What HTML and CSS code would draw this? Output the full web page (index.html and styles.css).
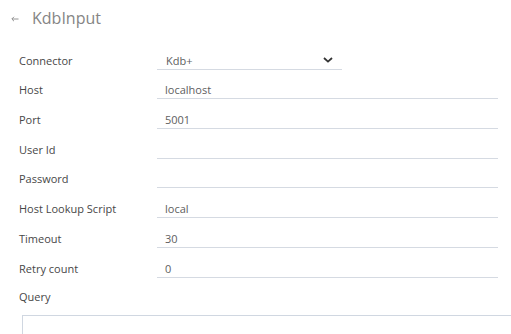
FILE: index.html
```html
<!DOCTYPE html>
<html lang="en">

<head>
  <meta charset="UTF-8">
  <meta name="viewport" content="width=device-width, initial-scale=1.0">
  <title>KdbInput</title>
  <link rel="stylesheet" href="styles.css">
</head>

<body>
  <div class="page">
    <div class="header">
      <span class="back">
        <svg width="8" height="6" viewBox="0 0 8 6"><path d="M7.5 3H1M3 0.8L0.8 3L3 5.2" fill="none" stroke="#888" stroke-width="0.9"/></svg>
      </span>
      <h1>KdbInput</h1>
    </div>
    <form class="form">
      <div class="form-row">
        <label>Connector</label>
        <div class="field select">
          <span>Kdb+</span>
          <svg width="10" height="6" viewBox="0 0 10 6"><path d="M1 1L5 4.6L9 1" fill="none" stroke="#333" stroke-width="1.8"/></svg>
        </div>
      </div>
      <div class="form-row">
        <label>Host</label>
        <div class="field">localhost</div>
      </div>
      <div class="form-row">
        <label>Port</label>
        <div class="field">5001</div>
      </div>
      <div class="form-row">
        <label>User Id</label>
        <div class="field"></div>
      </div>
      <div class="form-row">
        <label>Password</label>
        <div class="field"></div>
      </div>
      <div class="form-row">
        <label>Host Lookup Script</label>
        <div class="field">local</div>
      </div>
      <div class="form-row">
        <label>Timeout</label>
        <div class="field">30</div>
      </div>
      <div class="form-row">
        <label>Retry count</label>
        <div class="field">0</div>
      </div>
      <div class="query">
        <label>Query</label>
        <div class="query-box"></div>
      </div>
    </form>
  </div>
</body>

</html>
```

FILE: styles.css
```css
body {
  margin: 0;
  padding: 0;
  font-family: "Open Sans", Arial, sans-serif;
  background: #fff;
  color: #444;
  overflow: hidden;
}

.page {
  width: 511px;
  height: 334px;
  overflow: hidden;
}

.header {
  display: flex;
  align-items: center;
  height: 36px;
  padding-left: 11px;
}

.back {
  display: flex;
  width: 21px;
  padding-top: 1px;
}

.header h1 {
  margin: 0;
  font-size: 16px;
  font-weight: 400;
  line-height: 22px;
  color: #858585;
}

.form {
  padding: 10px 0 0 19px;
}

.form-row {
  display: flex;
  align-items: flex-end;
  height: 29.7px;
  padding-bottom: 6px;
  box-sizing: border-box;
}

.form-row label {
  width: 138px;
  font-size: 11px;
  line-height: 16px;
  padding-bottom: 1px;
  color: #474747;
}

.field {
  width: 333px;
  height: 16px;
  padding-left: 8px;
  font-size: 11px;
  line-height: 16px;
  color: #5e5e5e;
  border-bottom: 1px solid #d5dae2;
}

.field.select {
  display: flex;
  align-items: center;
  justify-content: space-between;
  width: 167px;
  padding-left: 9px;
  padding-right: 9px;
}

.field.select svg {
  margin-top: -2px;
}

.query label {
  display: block;
  margin-top: 5px;
  font-size: 11px;
  line-height: 16px;
  color: #474747;
}

.query-box {
  margin: 10px 0 0 3px;
  width: 520px;
  height: 60px;
  border: 1px solid #d0d7e1;
}
```
